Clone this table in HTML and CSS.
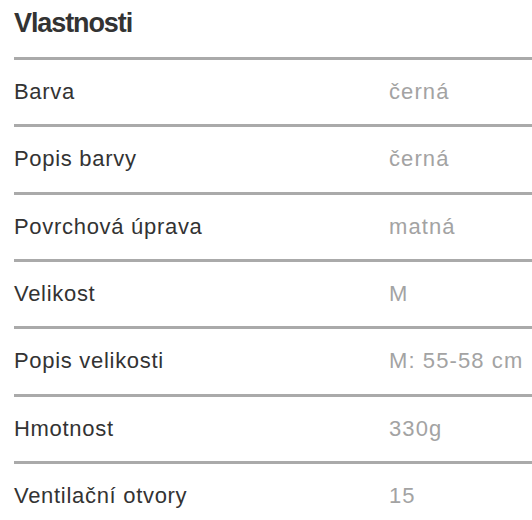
FILE: index.html
```html
<!DOCTYPE html>
<html lang="cs">
<head>
<meta charset="utf-8">
<link rel="stylesheet" href="styles.css">
</head>
<body>
<section class="props">
  <h2 class="title">Vlastnosti</h2>
  <div class="table">
    <div class="row"><span class="label">Barva</span><span class="value">černá</span></div>
    <div class="row"><span class="label">Popis barvy</span><span class="value">černá</span></div>
    <div class="row"><span class="label">Povrchová úprava</span><span class="value">matná</span></div>
    <div class="row"><span class="label">Velikost</span><span class="value">M</span></div>
    <div class="row"><span class="label">Popis velikosti</span><span class="value">M: 55-58 cm</span></div>
    <div class="row"><span class="label">Hmotnost</span><span class="value">330g</span></div>
    <div class="row"><span class="label">Ventilační otvory</span><span class="value">15</span></div>
  </div>
</section>
</body>
</html>
```
FILE: styles.css
```css
html, body {
  margin: 0;
  padding: 0;
  background: #fff;
  overflow: hidden;
}
body {
  font-family: "Liberation Sans", Arial, sans-serif;
  color: #333;
}
.props {
  padding-left: 14px;
  width: 518px;
}
.title {
  margin: 0;
  height: 57px;
  box-sizing: border-box;
  padding-top: 8px;
  font-size: 27px;
  line-height: 30px;
  font-weight: bold;
  letter-spacing: -1.1px;
  color: #333;
}
.row {
  display: flex;
  align-items: center;
  height: 67.33px;
  box-sizing: border-box;
  border-top: 3px solid #aaa;
  font-size: 22px;
  white-space: nowrap;
}
.label {
  flex: 0 0 375px;
  color: #333;
  letter-spacing: 0.7px;
}
.value {
  color: #a3a3a3;
  letter-spacing: 1.1px;
}
```
